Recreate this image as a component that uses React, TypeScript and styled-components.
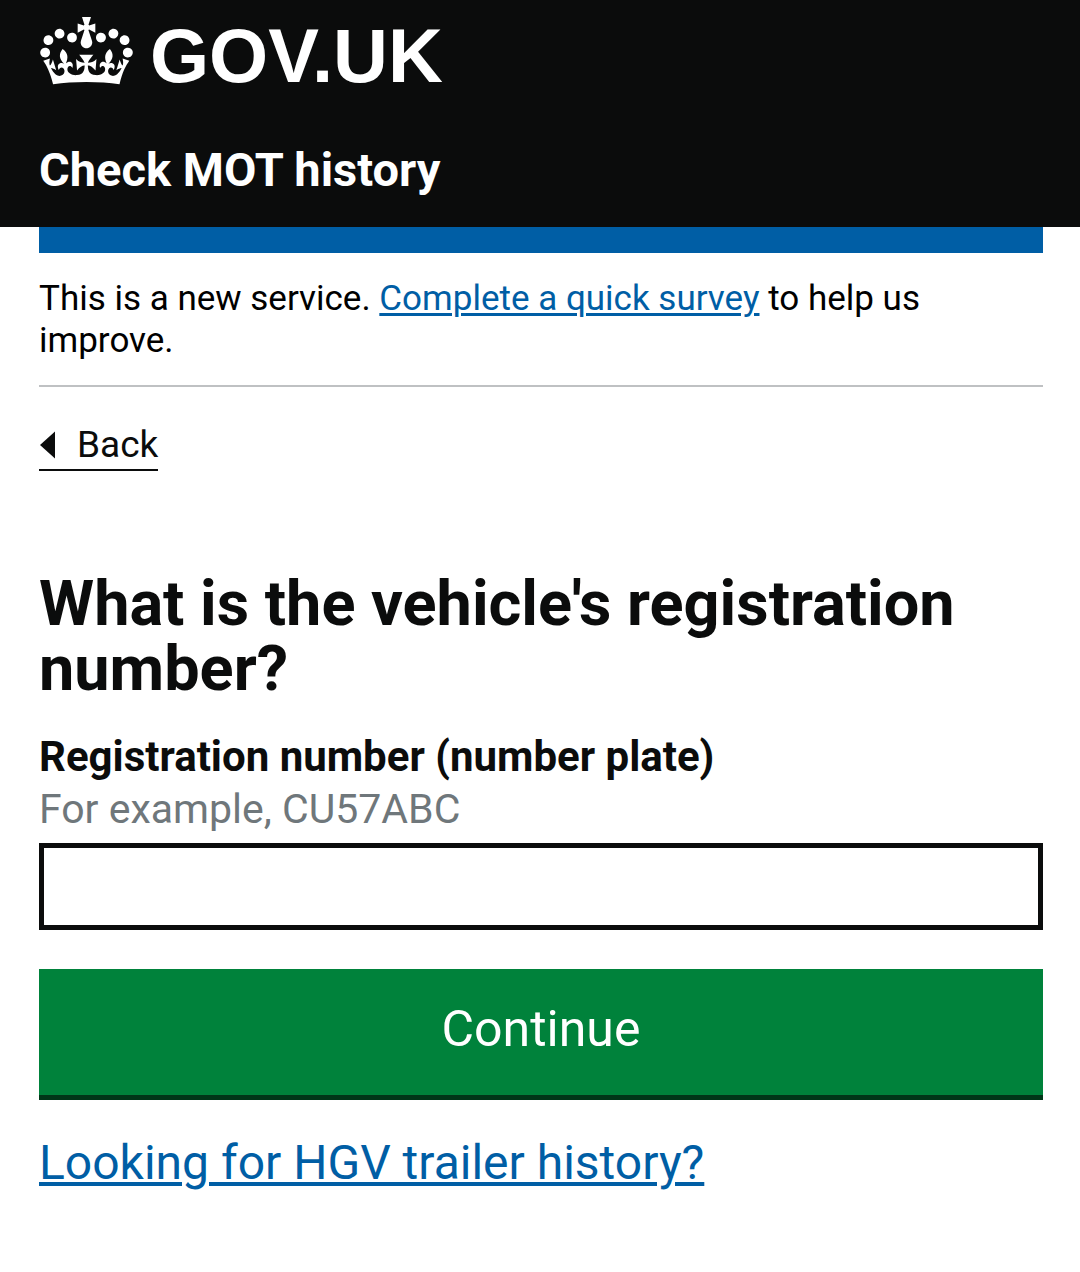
import React, { useState } from "react";
import styled, { createGlobalStyle } from "styled-components";

const ink = "#0b0c0c";
const blue = "#005ea5";

const GlobalStyle = createGlobalStyle`
  * { box-sizing: border-box; }
  body {
    margin: 0;
    background: #fff;
    color: ${ink};
    font-family: Roboto, "Noto Sans", "Liberation Sans", Arial, sans-serif;
  }
`;

const Header = styled.header`
  background: ${ink};
  color: #fff;
  padding: 11px 37px 27px 39px;
`;

const LogoLink = styled.a`
  display: flex;
  align-items: center;
  gap: 16px;
  width: fit-content;
  height: 80px;
  color: inherit;
  text-decoration: none;
`;

const Crown = styled.svg`
  width: 95px;
  height: 68px;
  fill: currentColor;
`;

const LogoText = styled.span`
  padding-top: 10px;
  font-family: "Liberation Sans", Arial, sans-serif;
  font-size: 76px;
  font-weight: 700;
  line-height: 88px;
`;

const ServiceLink = styled.a`
  display: block;
  width: fit-content;
  margin-top: 49px;
  color: inherit;
  font-size: 47px;
  font-weight: 700;
  line-height: 60px;
  text-decoration: none;
`;

const Page = styled.div`
  padding: 0 37px 72px 39px;
`;

const BlueBar = styled.div`
  height: 26px;
  background: ${blue};
`;

const Banner = styled.p`
  margin: 0;
  padding: 25px 0 23px;
  border-bottom: 2px solid #bfc1c3;
  color: #000;
  font-size: 35px;
  line-height: 42px;
`;

const TextLink = styled.a<{ $thickness: number }>`
  color: ${blue};
  text-decoration: underline;
  text-decoration-thickness: ${({ $thickness }) => $thickness}px;
  text-underline-offset: 3px;
`;

const BackLink = styled.a`
  display: flex;
  align-items: center;
  gap: 21px;
  width: fit-content;
  margin-top: 35px;
  padding-bottom: 1px;
  border-bottom: 2px solid ${ink};
  color: ${ink};
  font-size: 37px;
  line-height: 46px;
  text-decoration: none;
`;

const Arrow = styled.svg`
  width: 17px;
  height: 28px;
  fill: currentColor;
`;

const Title = styled.h1`
  margin: 100px 0 0;
  font-size: 63px;
  font-weight: 700;
  line-height: 65px;
`;

const Form = styled.form`
  margin-top: 30px;
`;

const Label = styled.label`
  display: block;
  font-size: 42px;
  font-weight: 700;
  line-height: 52px;
`;

const Hint = styled.span`
  display: block;
  color: #6f777b;
  font-size: 41px;
  line-height: 52px;
`;

const Field = styled.input`
  display: block;
  width: 100%;
  height: 87px;
  margin-top: 8px;
  padding: 8px 12px;
  border: 5px solid ${ink};
  border-radius: 0;
  background: #fff;
  color: ${ink};
  font: inherit;
  font-size: 42px;
`;

const Submit = styled.button`
  display: block;
  width: 100%;
  height: 126px;
  margin-top: 39px;
  padding: 0 0 6px;
  border: 0;
  border-radius: 0;
  background: #00823b;
  box-shadow: 0 5px 0 #003618;
  color: #fff;
  font: inherit;
  font-size: 50px;
  cursor: pointer;
`;

const More = styled.p`
  margin: 38px 0 0;
  font-size: 48px;
  line-height: 60px;
`;

export default function App() {
  const [registration, setRegistration] = useState("");

  return (
    <>
      <GlobalStyle />
      <Header>
        <LogoLink href="#">
          <Crown viewBox="0 0 132 97" aria-hidden="true">
            <path d="M25 30.2c3.5 1.5 7.7-.2 9.1-3.7 1.5-3.6-.2-7.8-3.9-9.2-3.6-1.4-7.6.3-9.1 3.9-1.4 3.5.3 7.5 3.9 9zM9 39.5c3.6 1.5 7.8-.2 9.2-3.7 1.5-3.6-.2-7.8-3.9-9.1-3.6-1.5-7.6.2-9.1 3.8-1.4 3.5.3 7.5 3.8 9zM4.4 57.2c3.5 1.5 7.7-.2 9.1-3.8 1.5-3.6-.2-7.7-3.9-9.1-3.5-1.5-7.6.3-9.1 3.8-1.4 3.5.3 7.6 3.9 9.1zm38.3-21.4c3.5 1.5 7.7-.2 9.1-3.8 1.5-3.6-.2-7.7-3.9-9.1-3.6-1.5-7.6.3-9.1 3.8-1.3 3.6.4 7.7 3.9 9.1zm64.4-5.6c-3.6 1.5-7.8-.2-9.1-3.7-1.5-3.6.2-7.8 3.8-9.2 3.6-1.4 7.7.3 9.2 3.9 1.3 3.5-.4 7.5-3.9 9zm15.9 9.3c-3.6 1.5-7.7-.2-9.1-3.7-1.5-3.6.2-7.8 3.7-9.1 3.6-1.5 7.7.2 9.2 3.8 1.5 3.5-.3 7.5-3.8 9zm4.7 17.7c-3.6 1.5-7.8-.2-9.2-3.8-1.5-3.6.2-7.7 3.9-9.1 3.6-1.5 7.7.3 9.2 3.8 1.3 3.5-.4 7.6-3.9 9.1zM89.3 35.8c-3.6 1.5-7.8-.2-9.2-3.8-1.4-3.6.2-7.7 3.9-9.1 3.6-1.5 7.7.3 9.2 3.8 1.4 3.6-.3 7.7-3.9 9.1zM69.7 17.7l8.9 4.7V9.3l-8.9 2.8c-.2-.3-.5-.6-.9-.9L72.4 0H59.6l3.5 11.2c-.3.3-.6.5-.9.9l-8.8-2.8v13.1l8.8-4.7c.3.3.6.7.9.9l-5 15.4v.1c-.2.8-.4 1.6-.4 2.4 0 4.1 3.1 7.5 7 8.1h.2c.3 0 .7.1 1 .1.4 0 .7 0 1-.1h.2c4-.6 7.1-4.1 7.1-8.1 0-.8-.1-1.7-.4-2.4V34l-5.1-15.4c.4-.2.7-.6 1-.9zM66 92.8c16.9 0 32.8 1.1 47.1 3.2 4-16.9 8.9-26.7 14-33.5l-9.6-3.4c1 4.9 1.1 7.2 0 10.2-1.5-1.4-3-4.3-4.2-8.7L108.6 76c2.8-2 5-3.2 7.5-3.3-4.4 9.4-10 11.9-13.6 11.2-4.3-.8-6.3-4.6-5.6-7.9 1-4.7 5.7-5.9 8-.5 4.3-8.7-3-11.4-7.6-8.8 7.1-7.2 7.9-13.5 2.1-21.1-8 6.1-8.1 12.3-4.5 20.8-4.7-5.4-12.1-2.5-9.5 6.2 3.4-5.2 7.9-2 7.2 3.1-.6 4.3-6.4 7.8-13.5 7.2-10.3-.9-10.9-8-11.2-13.8 2.5-.5 7.1 1.8 11 7.3L80.2 60c-4.1 4.4-8 5.3-12.3 5.4 1.4-4.4 8-11.6 8-11.6H55.5s6.4 7.2 7.9 11.6c-4.2-.1-8-1-12.3-5.4l1.4 16.4c3.9-5.5 8.5-7.7 10.9-7.3-.3 5.8-.9 12.8-11.1 13.8-7.2.6-12.9-2.9-13.5-7.2-.7-5 3.8-8.3 7.1-3.1 2.7-8.7-4.6-11.6-9.4-6.2 3.7-8.5 3.6-14.7-4.6-20.8-5.8 7.6-5 13.9 2.2 21.1-4.7-2.6-11.9.1-7.7 8.8 2.3-5.5 7.1-4.2 8.1.5.7 3.3-1.3 7.1-5.7 7.9-3.5.7-9-1.8-13.5-11.2 2.5.1 4.7 1.3 7.5 3.3l-4.7-15.4c-1.2 4.4-2.7 7.2-4.3 8.7-1.1-3-.9-5.3 0-10.2l-9.5 3.4c5 6.9 9.9 16.7 14 33.5 14.8-2.1 30.8-3.2 47.7-3.2z" />
          </Crown>
          <LogoText>GOV.UK</LogoText>
        </LogoLink>
        <ServiceLink href="#">Check MOT history</ServiceLink>
      </Header>
      <Page>
        <BlueBar />
        <Banner>
          This is a new service.{" "}
          <TextLink href="#" $thickness={3}>Complete a quick survey</TextLink> to help us improve.
        </Banner>
        <BackLink href="#">
          <Arrow viewBox="0 0 17 28" aria-hidden="true">
            <path d="M1 14 16 0.5V27.5Z" />
          </Arrow>
          Back
        </BackLink>
        <main>
          <Title>What is the vehicle's registration number?</Title>
          <Form onSubmit={(event) => event.preventDefault()}>
            <Label htmlFor="registration">Registration number (number plate)</Label>
            <Hint id="registration-hint">For example, CU57ABC</Hint>
            <Field
              id="registration"
              type="text"
              aria-describedby="registration-hint"
              value={registration}
              onChange={(event) => setRegistration(event.target.value)}
            />
            <Submit type="submit">Continue</Submit>
          </Form>
          <More>
            <TextLink href="#" $thickness={4}>Looking for HGV trailer history?</TextLink>
          </More>
        </main>
      </Page>
    </>
  );
}
